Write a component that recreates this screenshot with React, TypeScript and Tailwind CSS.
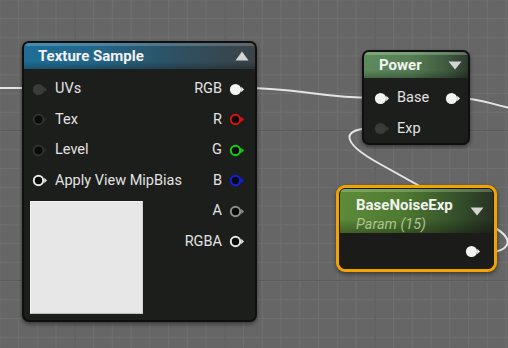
import React from "react";

type PinKind = "filled" | "ring" | "dark" | "black";

function Pin({ kind, color = "#e6e6e6" }: { kind: PinKind; color?: string }) {
  let circle: React.ReactNode;
  let tri = color;
  if (kind === "filled") {
    circle = <circle cx="6.5" cy="6.5" r="5.6" fill="#f4f4f4" />;
    tri = "#f4f4f4";
  } else if (kind === "ring") {
    circle = <circle cx="6.5" cy="6.5" r="4.7" fill="#0a0a0a" stroke={color} strokeWidth="2" />;
  } else if (kind === "dark") {
    circle = <circle cx="6.5" cy="6.5" r="5.6" fill="#3b3b3b" />;
    tri = "#3b3b3b";
  } else {
    circle = <circle cx="6.5" cy="6.5" r="4.8" fill="#0b0b0b" stroke="#343434" strokeWidth="1.7" />;
    tri = "#2a2a2a";
  }
  return (
    <svg width="18" height="13" viewBox="0 0 18 13" className="shrink-0">
      {circle}
      <polygon points="12.2,3.8 15,6.5 12.2,9.2" fill={tri} />
    </svg>
  );
}

function TriUp() {
  return (
    <svg width="14" height="10" viewBox="0 0 14 10">
      <polygon points="7,0.5 13.5,9.5 0.5,9.5" fill="#d4d4d4" />
    </svg>
  );
}

function TriDown() {
  return (
    <svg width="14" height="9" viewBox="0 0 14 9">
      <polygon points="0.5,0.5 13.5,0.5 7,8.5" fill="#d4d4d4" />
    </svg>
  );
}

function Grid() {
  return (
    <svg className="absolute inset-0" width="508" height="348">
      <defs>
        <pattern id="minor" x="18" y="18" width="18.75" height="18.75" patternUnits="userSpaceOnUse">
          <rect x="0" y="0" width="1" height="18.75" fill="#6f6f6f" />
          <rect x="0" y="0" width="18.75" height="1" fill="#6f6f6f" />
        </pattern>
        <pattern id="major" x="74.5" y="130" width="150" height="150" patternUnits="userSpaceOnUse">
          <rect x="0" y="0" width="1" height="150" fill="#5b5b5b" />
          <rect x="0" y="0" width="150" height="1" fill="#5b5b5b" />
        </pattern>
      </defs>
      <rect width="508" height="348" fill="#666666" />
      <rect width="508" height="348" fill="url(#minor)" />
      <rect width="508" height="348" fill="url(#major)" />
    </svg>
  );
}

function Wires() {
  return (
    <svg className="absolute inset-0" width="508" height="348" fill="none">
      <g stroke="#e4e4e4" strokeWidth="2" strokeLinecap="round">
        <path d="M -2 88 L 40 88" />
        <path d="M 243 88 C 300 88, 320 98, 374 98" />
        <path d="M 457 98 C 480 98, 490 104, 510 108" />
        <path d="M 480 253 C 512 253, 515 239, 495 228 L 380 164 C 340 142, 340 128, 376 128" />
      </g>
    </svg>
  );
}

const font = { fontFamily: "Roboto, 'Noto Sans', sans-serif" };

function LeftRow({ kind, label }: { kind: PinKind; label: string }) {
  return (
    <div className="flex h-[30.5px] items-center pl-[7.5px]">
      <Pin kind={kind} />
      <span className="ml-[5.5px] text-[14.5px] leading-none text-[#e2e2e2]">{label}</span>
    </div>
  );
}

function RightRow({ kind, label, color }: { kind: PinKind; label: string; color?: string }) {
  return (
    <div className="flex h-[30.5px] items-center justify-end pr-[8.5px]">
      <span className="mr-[6.5px] text-[14.5px] leading-none text-[#e2e2e2]">{label}</span>
      <Pin kind={kind} color={color} />
    </div>
  );
}

export default function App() {
  return (
    <div className="relative h-[348px] w-[508px] overflow-hidden bg-[#666666]" style={font}>
      <Grid />
      <Wires />

      {/* Texture Sample */}
      <div className="absolute left-[22px] top-[41px] flex h-[281px] w-[235px] flex-col overflow-hidden rounded-[7px] border-2 border-[#0e0f0e] bg-[#1c1e1c] shadow-[0_2px_4px_rgba(0,0,0,0.45)]">
        <div className="relative flex h-[26px] shrink-0 items-center justify-between bg-[linear-gradient(90deg,#1f6e96_0%,#23678a_30%,#2e5163_65%,#3a4348_100%)] pl-[14px] pr-[6px] pt-[1px]">
          <div className="absolute inset-x-0 top-0 h-[3px] bg-[linear-gradient(90deg,rgba(140,200,230,0.35),rgba(200,200,200,0.25))]" />
          <div className="absolute inset-x-0 bottom-0 h-[8px] bg-[linear-gradient(180deg,rgba(0,0,0,0),rgba(0,0,0,0.25))]" />
          <span className="relative text-[15px] font-bold leading-none text-[#f2f2f2]">Texture Sample</span>
          <span className="relative mb-[2px]"><TriUp /></span>
        </div>
        <div className="flex flex-1 justify-between pt-[5px]">
          <div className="flex flex-col">
            <LeftRow kind="dark" label="UVs" />
            <LeftRow kind="black" label="Tex" />
            <LeftRow kind="black" label="Level" />
            <LeftRow kind="ring" label="Apply View MipBias" />
            <div className="ml-[6px] mt-[5px] h-[113px] w-[113px] border border-[#f2f2f2] border-b-[#bdbdbd] border-r-[#cfcfcf] bg-[#e7e7e7]" />
          </div>
          <div className="flex flex-col">
            <RightRow kind="filled" label="RGB" />
            <RightRow kind="ring" label="R" color="#e01010" />
            <RightRow kind="ring" label="G" color="#10d010" />
            <RightRow kind="ring" label="B" color="#1020e8" />
            <RightRow kind="ring" label="A" color="#8e8e8e" />
            <RightRow kind="ring" label="RGBA" color="#e4e4e4" />
          </div>
        </div>
      </div>

      {/* Power */}
      <div className="absolute left-[362px] top-[50px] flex h-[95px] w-[108px] flex-col overflow-hidden rounded-[7px] border-2 border-[#0e0f0e] bg-[#1c1e1c] shadow-[0_2px_4px_rgba(0,0,0,0.45)]">
        <div className="relative flex h-[26px] shrink-0 items-center justify-between bg-[linear-gradient(90deg,#5d8a5c_0%,#567e55_45%,#3f5a3f_80%,#2e3a2e_100%)] pl-[15px] pr-[6px] pt-[1px]">
          <div className="absolute inset-x-0 top-0 h-[3px] bg-[rgba(200,230,200,0.3)]" />
          <div className="absolute inset-x-0 bottom-0 h-[8px] bg-[linear-gradient(180deg,rgba(0,0,0,0),rgba(0,0,0,0.25))]" />
          <span className="relative text-[15px] font-bold leading-none text-[#f2f2f2]">Power</span>
          <span className="relative"><TriDown /></span>
        </div>
        <div className="flex flex-col pt-[5px]">
          <div className="flex h-[30.5px] items-center pl-[9.5px] pr-[5.5px]">
            <Pin kind="filled" />
            <span className="ml-[5.5px] flex-1 text-[14.5px] leading-none text-[#e2e2e2]">Base</span>
            <Pin kind="filled" />
          </div>
          <div className="flex h-[30.5px] items-center pl-[9.5px]">
            <Pin kind="dark" />
            <span className="ml-[5.5px] text-[14.5px] leading-none text-[#e2e2e2]">Exp</span>
          </div>
        </div>
      </div>

      {/* BaseNoiseExp */}
      <div className="absolute left-[336px] top-[185px] h-[87px] w-[161px] rounded-[9px] border-[3px] border-[#f2a300] bg-[#f2a300] shadow-[0_2px_4px_rgba(0,0,0,0.45)]">
        <div className="flex h-full flex-col overflow-hidden rounded-[6px] border border-[#1a1a10] bg-[#1b1c19]">
          <div className="relative flex h-[44px] shrink-0 items-start justify-between bg-[linear-gradient(100deg,#5d8c3a_0%,#4f7a31_40%,#34502a_75%,#262e22_100%)] pl-[16px] pr-[9px] pt-[8px]">
            <div className="absolute inset-x-0 top-0 h-[3px] bg-[rgba(200,230,180,0.3)]" />
            <div className="absolute inset-x-0 bottom-0 h-[14px] bg-[linear-gradient(180deg,rgba(0,0,0,0),rgba(0,0,0,0.3))]" />
            <div className="relative flex flex-col">
              <span className="text-[15px] font-bold leading-[17px] text-[#f2f2f2]">BaseNoiseExp</span>
              <span className="mt-[3px] text-[14.5px] italic leading-[16px] text-[#abc48f]">Param (15)</span>
            </div>
            <span className="relative mt-[10px]"><TriDown /></span>
          </div>
          <div className="flex flex-1 items-center justify-end pr-[10px] pt-[2px]">
            <Pin kind="filled" />
          </div>
        </div>
      </div>
    </div>
  );
}
